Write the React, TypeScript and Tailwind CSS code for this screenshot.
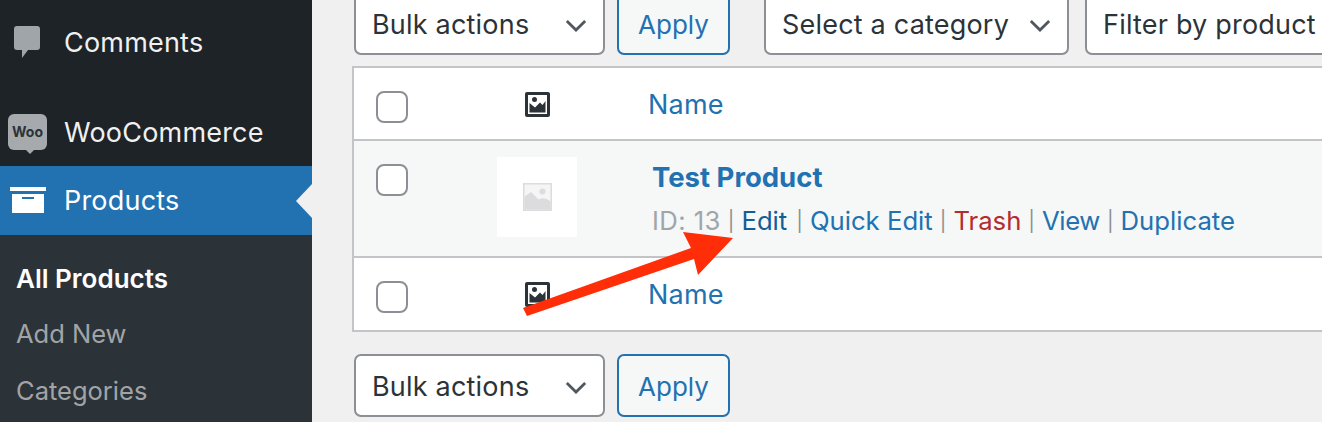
const font = "font-['Inter','Liberation_Sans',sans-serif]";

function Chevron({ className }: { className: string }) {
  return (
    <svg className={className} viewBox="0 0 24 14" fill="none">
      <path d="M2 2l10 10L22 2" stroke="#50575e" strokeWidth="3" />
    </svg>
  );
}

function ImageIcon({ className }: { className: string }) {
  return (
    <svg className={className} viewBox="0 0 25 25">
      <rect width="25" height="25" rx="2" fill="#2c3338" />
      <rect x="3" y="3" width="19" height="19" fill="#fff" />
      <path d="M4.500 20.500V11l5.500 4.500 5-5 2.500 2.500 3-4v11.500z" fill="#2c3338" />
      <circle cx="9.500" cy="7.500" r="2.500" fill="#2c3338" />
    </svg>
  );
}

function Placeholder() {
  return (
    <svg className="w-[29px] h-[29px]" viewBox="0 0 29 29">
      <rect width="29" height="28" fill="#dcdcde" />
      <rect x="1.500" y="1.500" width="26" height="25" fill="#fff" opacity="0.7" />
      <path d="M1.500 26.500V13.500L8 9l7.500 7.500Q21 13 27.500 18.500v8z" fill="#dcdcde" />
      <circle cx="19.500" cy="8.500" r="3" fill="#dcdcde" />
    </svg>
  );
}

function Checkbox() {
  return <div className="w-[32px] h-[32px] bg-white border-2 border-[#8c8f94] rounded-[8px]" />;
}

function Select({ label, width, chevron = true }: { label: string; width: string; chevron?: boolean }) {
  return (
    <div className={`${width} h-[63px] shrink-0 bg-white border-2 border-[#8c8f94] rounded-[7px] flex items-center justify-between pl-[16px] pr-[16px] pt-[3px] text-[27px] tracking-[0.2px] text-[#2c3338]`}>
      <span className="whitespace-nowrap">{label}</span>
      {chevron && <Chevron className="w-[22px] h-[13px]" />}
    </div>
  );
}

function Apply() {
  return (
    <div className="w-[113px] h-[63px] shrink-0 bg-[#f6f7f7] border-2 border-[#2271b1] rounded-[7px] flex items-center justify-center pt-px text-[26px] text-[#2271b1]">
      Apply
    </div>
  );
}

function HeaderRow({ height, border }: { height: string; border: string }) {
  return (
    <div className={`flex ${height} ${border} border-[#c3c4c7]`}>
      <div className="w-[106px] pl-[22px] pt-[23px]">
        <Checkbox />
      </div>
      <div className="w-[154px] flex justify-center pt-[24px]">
        <ImageIcon className="w-[25px] h-[25px]" />
      </div>
      <div className="pl-[34px] pt-[21px] text-[27px] tracking-[0.2px] leading-[32px] text-[#2271b1]">Name</div>
    </div>
  );
}

function Sep() {
  return <span className="text-[20px] text-[#8c8f94] mx-[7px] align-[2px]">|</span>;
}

export default function App() {
  return (
    <div className={`relative flex w-[1322px] h-[422px] overflow-hidden bg-[#f0f0f1] ${font}`}>
      {/* sidebar */}
      <div className="w-[312px] shrink-0 flex flex-col bg-[#1d2327] text-[27px] tracking-[0.2px] text-[#f0f0f1]">
        <div className="h-[84px] flex items-center">
          <div className="w-[64px] flex justify-start pl-[14px]">
            <svg className="w-[26px] h-[32px]" viewBox="0 0 26 32">
              <path d="M3 0h20a3 3 0 013 3v18a3 3 0 01-3 3h-9l-6 8v-8H3a3 3 0 01-3-3V3a3 3 0 013-3z" fill="#a0a5aa" />
            </svg>
          </div>
          <span className="pt-[2px]">Comments</span>
        </div>
        <div className="h-[82px] pt-[14px] flex items-center">
          <div className="w-[64px] pl-[8px]">
            <div className="relative w-[39px] h-[36px] bg-[#a7aaad] rounded-[6px] flex items-center justify-center text-[14px] font-bold leading-none tracking-normal text-[#2c3338]">
              Woo
              <div className="absolute left-[18px] -bottom-[4px] w-0 h-0 border-l-[4px] border-r-[4px] border-t-[4px] border-l-transparent border-r-transparent border-t-[#a7aaad]" />
            </div>
          </div>
          <span className="pt-[2px]">WooCommerce</span>
        </div>
        <div className="relative h-[69px] bg-[#2271b1] flex items-center text-white">
          <div className="w-[64px] pl-[10px]">
            <svg className="w-[36px] h-[27px]" viewBox="0 0 36 27">
              <rect width="36" height="4" fill="#fff" />
              <path d="M2 7h32v19H2z" fill="#fff" />
              <rect x="12" y="10" width="12" height="2" fill="#2271b1" />
            </svg>
          </div>
          <span className="pt-[2px]">Products</span>
          <div className="absolute right-0 top-[18px] w-0 h-0 border-y-[17px] border-r-[16px] border-y-transparent border-r-[#f0f0f1]" />
        </div>
        <div className="flex-1 bg-[#2c3338] pt-[15px] pl-[16px] text-[25.500px] tracking-normal text-[#c3c4c7]/80">
          <div className="h-[56px] flex items-center text-[26px] font-semibold text-white">All Products</div>
          <div className="h-[57px] flex items-center">Add New</div>
          <div className="h-[56px] flex items-center">Categories</div>
        </div>
      </div>

      {/* main column */}
      <div className="flex-1 min-w-0 pl-[40px] -mt-[8px]">
        <div className="flex pl-[2px] w-[1200px]">
          <Select label="Bulk actions" width="w-[251px]" />
          <div className="ml-[12px]">
            <Apply />
          </div>
          <div className="ml-[34px]">
            <Select label="Select a category" width="w-[305px]" />
          </div>
          <div className="ml-[16px]">
            <Select label="Filter by product" width="w-[320px]" chevron={false} />
          </div>
        </div>

        <div className="mt-[11px] w-[1100px] bg-white border-2 border-[#c3c4c7]">
          <HeaderRow height="h-[73px]" border="border-b-2" />
          <div className="flex h-[117px] bg-[#f6f7f7] border-b-2 border-[#c3c4c7]">
            <div className="w-[106px] pl-[22px] pt-[23px]">
              <Checkbox />
            </div>
            <div className="w-[154px] flex justify-center pt-[16px]">
              <div className="w-[80px] h-[80px] bg-white flex items-center justify-center">
                <Placeholder />
              </div>
            </div>
            <div className="pl-[38px] pt-[18px]">
              <div className="text-[27.500px] leading-[36px] font-bold text-[#2271b1]">Test Product</div>
              <div className="mt-[8px] text-[25.700px] leading-[36px] whitespace-nowrap text-[#2271b1]">
                <span className="text-[#a0a5aa] tracking-[0.4px]">ID: 13</span>
                <Sep />
                <span className="text-[#135e96] mr-[2px]">Edit</span>
                <Sep />
                <span>Quick Edit</span>
                <Sep />
                <span className="text-[#b32d2e]">Trash</span>
                <Sep />
                <span className="tracking-[-0.4px]">View</span>
                <Sep />
                <span>Duplicate</span>
              </div>
            </div>
          </div>
          <HeaderRow height="h-[72px]" border="" />
        </div>

        <div className="flex mt-[22px] pl-[2px]">
          <Select label="Bulk actions" width="w-[251px]" />
          <div className="ml-[12px]">
            <Apply />
          </div>
        </div>
      </div>

      {/* annotation arrow */}
      <svg className="absolute inset-0 pointer-events-none" width="1322" height="422" viewBox="0 0 1322 422">
        <path d="M523 308L691 248L683 232L733 238L698 275L694 259L527 316z" fill="#ff2d08" />
      </svg>
    </div>
  );
}
